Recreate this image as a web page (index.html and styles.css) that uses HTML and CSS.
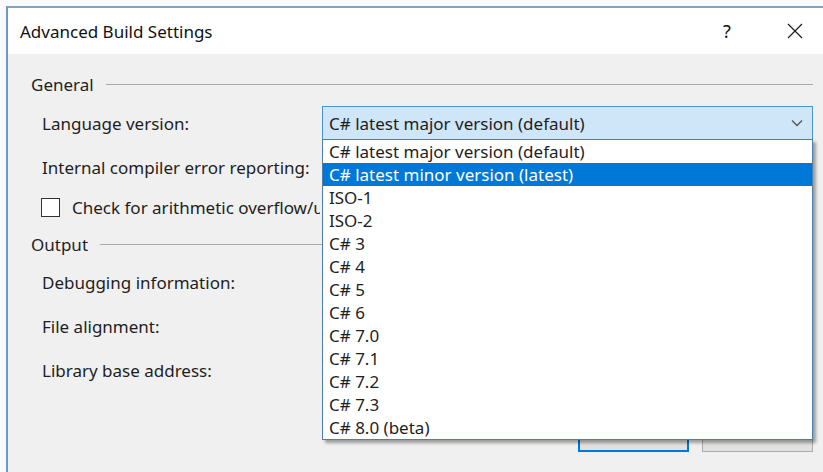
FILE: index.html
```html
<!DOCTYPE html>
<html lang="en">
<head>
<meta charset="utf-8">
<title>Advanced Build Settings</title>
<link rel="stylesheet" href="styles.css">
</head>
<body>
<div class="window">
  <div class="titlebar">
    <span class="title">Advanced Build Settings</span>
    <span class="help">?</span>
    <span class="close">
      <svg width="16" height="16" viewBox="0 0 16 16"><path d="M1 1 L15 15 M15 1 L1 15" stroke="#1a1a1a" stroke-width="1.2" fill="none"/></svg>
    </span>
  </div>
  <div class="content">
    <div class="group-head"><span>General</span><span class="rule"></span></div>
    <div class="row first">
      <span class="label">Language version:</span>
      <div class="combo open">
        <span class="combo-value">C# latest major version (default)</span>
        <svg class="chevron" width="12" height="8" viewBox="0 0 12 8"><path d="M1 1.5 L6 6.5 L11 1.5" stroke="#555" stroke-width="1.3" fill="none"/></svg>
        <ul class="listbox">
          <li>C# latest major version (default)</li>
          <li class="selected">C# latest minor version (latest)</li>
          <li>ISO-1</li>
          <li>ISO-2</li>
          <li>C# 3</li>
          <li>C# 4</li>
          <li>C# 5</li>
          <li>C# 6</li>
          <li>C# 7.0</li>
          <li>C# 7.1</li>
          <li>C# 7.2</li>
          <li>C# 7.3</li>
          <li>C# 8.0 (beta)</li>
        </ul>
      </div>
    </div>
    <div class="row">
      <span class="label">Internal compiler error reporting:</span>
    </div>
    <div class="row short">
      <span class="checkbox"></span>
      <span class="check-label">Check for arithmetic overflow/underflow</span>
    </div>
    <div class="group-head output"><span>Output</span><span class="rule"></span></div>
    <div class="row first out">
      <span class="label">Debugging information:</span>
    </div>
    <div class="row"><span class="label">File alignment:</span></div>
    <div class="row"><span class="label">Library base address:</span></div>
    <div class="footer">
      <button class="btn default">OK</button>
      <button class="btn">Cancel</button>
    </div>
  </div>
</div>
</body>
</html>
```
FILE: styles.css
```css
html, body {
  margin: 0;
  padding: 0;
  overflow: hidden;
}

body {
  width: 823px;
  height: 472px;
  background: #f8fafb;
  font-family: "Noto Sans", "Open Sans", sans-serif;
  font-size: 17px;
  color: #1e1e1e;
}

.window {
  margin: 6px 0 0 6px;
  width: 830px;
  height: 480px;
  border-left: 2px solid #6b9bc4;
  border-top: 2px solid #7fa4c4;
  background: #f0f0f0;
  display: flex;
  flex-direction: column;
}

.titlebar {
  height: 46px;
  flex: none;
  background: #ffffff;
  display: flex;
  align-items: center;
  padding-left: 12px;
  font-size: 17px;
  color: #111;
}

.title {
  flex: 1;
}

.help {
  width: 20px;
  margin-right: 50px;
  font-size: 18px;
  text-align: center;
}

.close {
  width: 16px;
  margin-right: 35px;
  display: flex;
}

.content {
  flex: 1;
  display: flex;
  flex-direction: column;
  padding: 20px 25px 0 23px;
}

.group-head {
  height: 20px;
  display: flex;
  align-items: center;
  gap: 12px;
}

.group-head .rule {
  flex: 1;
  height: 1px;
  background: #a9a9a9;
}

.group-head.output {
  margin-top: 9px;
}

.row {
  height: 44px;
  display: flex;
  align-items: center;
  padding-left: 11px;
}

.row.first {
  margin-top: 7px;
}

.row.first.out {
  margin-top: 6px;
}

.row.short {
  height: 36px;
  padding-left: 10px;
}

.label {
  width: 280px;
  flex: none;
  white-space: nowrap;
}

.combo {
  position: relative;
  flex: 1;
  height: 34px;
  box-sizing: border-box;
  border: 1px solid #4a94d4;
  background: #cfe5f8;
  display: flex;
  align-items: center;
  padding: 0 9px 0 6px;
}

.combo-value {
  flex: 1;
}

.chevron {
  flex: none;
}

.listbox {
  position: absolute;
  left: -1px;
  right: -1px;
  top: 100%;
  margin: 0;
  padding: 0;
  list-style: none;
  background: #ffffff;
  border: 1px solid #4d7fae;
  box-shadow: 3px 3px 3px rgba(0, 0, 0, 0.35);
  z-index: 2;
}

.listbox li {
  height: 23px;
  line-height: 23px;
  padding-left: 6px;
  white-space: nowrap;
}

.listbox li.selected {
  background: #0078d7;
  color: #ffffff;
}

.checkbox {
  width: 17px;
  height: 17px;
  border: 1px solid #333;
  background: #fff;
  flex: none;
  margin-right: 12px;
}

.check-label {
  width: 248px;
  overflow: hidden;
  white-space: nowrap;
}

.footer {
  display: flex;
  justify-content: flex-end;
  gap: 13px;
  margin-top: 28px;
}

.btn {
  width: 111px;
  height: 32px;
  box-sizing: border-box;
  padding: 0 0 6px;
  background: #e1e1e1;
  border: 1px solid #adadad;
  font: inherit;
  color: #111;
}

.btn.default {
  border: 2px solid #0078d7;
}
```
